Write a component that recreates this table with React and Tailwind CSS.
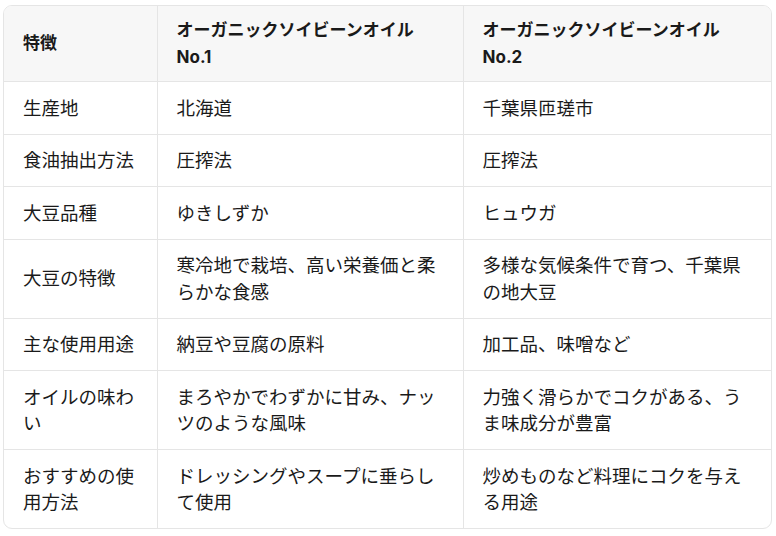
import React from 'react';

const rows = [
  ['生産地', '北海道', '千葉県匝瑳市'],
  ['食油抽出方法', '圧搾法', '圧搾法'],
  ['大豆品種', 'ゆきしずか', 'ヒュウガ'],
  ['大豆の特徴', '寒冷地で栽培、高い栄養価と柔らかな食感', '多様な気候条件で育つ、千葉県の地大豆'],
  ['主な使用用途', '納豆や豆腐の原料', '加工品、味噌など'],
  ['オイルの味わい', 'まろやかでわずかに甘み、ナッツのような風味', '力強く滑らかでコクがある、うま味成分が豊富'],
  ['おすすめの使用方法', 'ドレッシングやスープに垂らして使用', '炒めものなど料理にコクを与える用途'],
];

const font = { fontFamily: '"Inter", "Noto Sans CJK JP", sans-serif' };

export default function App() {
  return (
    <div className="bg-white min-h-screen pl-[3px] pt-[5px]" style={font}>
      <div className="w-[769px] border border-[#e5e5e5] rounded-[9px] overflow-hidden">
        <table className="w-full table-fixed border-collapse text-[#1a1a1a]">
          <colgroup>
            <col className="w-[153px]" />
            <col className="w-[306px]" />
            <col />
          </colgroup>
          <thead>
            <tr className="bg-[#f7f7f7]">
              <th className="text-left align-middle font-bold text-[17px] leading-[26.5px] pl-[19px] pr-5 py-[11px]">特徴</th>
              <th className="text-left align-middle font-bold text-[17px] leading-[26.5px] pl-[19px] pr-5 py-[11px] border-l border-[#e5e5e5]">
                オーガニックソイビーンオイル<br />No.1
              </th>
              <th className="text-left align-middle font-bold text-[17px] leading-[26.5px] pl-[19px] pr-5 py-[11px] border-l border-[#e5e5e5]">
                オーガニックソイビーンオイル<br />No.2
              </th>
            </tr>
          </thead>
          <tbody>
            {rows.map((r, i) => (
              <tr key={i} className="border-t border-[#e5e5e5]">
                <td className="align-middle text-[18.5px] leading-[26.5px] pl-[19px] pr-5 py-[12.5px]">{r[0]}</td>
                <td className="align-middle text-[18.5px] leading-[26.5px] pl-[19px] pr-5 py-[12.5px] border-l border-[#e5e5e5]">{r[1]}</td>
                <td className="align-middle text-[18.5px] leading-[26.5px] pl-[19px] pr-5 py-[12.5px] border-l border-[#e5e5e5]">{r[2]}</td>
              </tr>
            ))}
          </tbody>
        </table>
      </div>
    </div>
  );
}
